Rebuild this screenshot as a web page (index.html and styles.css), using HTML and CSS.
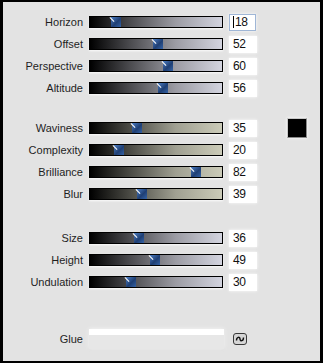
FILE: index.html
```html
<!DOCTYPE html>
<html lang="en">
<head>
    <meta charset="UTF-8">
    <meta name="viewport" content="width=device-width, initial-scale=1.0">
    <title>Waves</title>
    <link rel="stylesheet" href="styles.css">
</head>
<body>
    <div class="panel">
        <div class="group">
            <div class="row">
                <span class="lbl">Horizon</span>
                <div class="track cool"><span class="thumb" style="left:21px"></span></div>
                <div class="num focus"><span class="caret"></span>18</div>
            </div>
            <div class="row">
                <span class="lbl">Offset</span>
                <div class="track cool"><span class="thumb" style="left:63px"></span></div>
                <div class="num">52</div>
            </div>
            <div class="row">
                <span class="lbl">Perspective</span>
                <div class="track cool"><span class="thumb" style="left:73px"></span></div>
                <div class="num">60</div>
            </div>
            <div class="row">
                <span class="lbl">Altitude</span>
                <div class="track cool"><span class="thumb" style="left:68px"></span></div>
                <div class="num">56</div>
            </div>
        </div>

        <div class="group second">
            <div class="row">
                <span class="lbl">Waviness</span>
                <div class="track warm"><span class="thumb" style="left:42px"></span></div>
                <div class="num">35</div>
                <div class="swatch"></div>
            </div>
            <div class="row">
                <span class="lbl">Complexity</span>
                <div class="track warm"><span class="thumb" style="left:24px"></span></div>
                <div class="num">20</div>
            </div>
            <div class="row">
                <span class="lbl">Brilliance</span>
                <div class="track warm"><span class="thumb" style="left:101px"></span></div>
                <div class="num">82</div>
            </div>
            <div class="row">
                <span class="lbl">Blur</span>
                <div class="track warm"><span class="thumb" style="left:47px"></span></div>
                <div class="num">39</div>
            </div>
        </div>

        <div class="group third">
            <div class="row">
                <span class="lbl">Size</span>
                <div class="track cool"><span class="thumb" style="left:44px"></span></div>
                <div class="num">36</div>
            </div>
            <div class="row">
                <span class="lbl">Height</span>
                <div class="track cool"><span class="thumb" style="left:60px"></span></div>
                <div class="num">49</div>
            </div>
            <div class="row">
                <span class="lbl">Undulation</span>
                <div class="track cool"><span class="thumb" style="left:36px"></span></div>
                <div class="num">30</div>
            </div>
        </div>

        <div class="group glue">
            <div class="row">
                <span class="lbl">Glue</span>
                <div class="field"></div>
                <button class="link" type="button">
                    <svg width="14" height="12" viewBox="0 0 14 12">
                        <rect x="0.5" y="0.5" width="13" height="11" rx="2.5" fill="#d6d6d6" stroke="#3a3a3a"/>
                        <path d="M3.5 7.5 C3.5 3.5, 7 3.5, 7 6 S10.5 8.5, 10.5 4.5" fill="none" stroke="#111" stroke-width="1.4"/>
                    </svg>
                </button>
            </div>
        </div>
    </div>
</body>
</html>
```

FILE: styles.css
```css
body, html {
    margin: 0;
    height: 100%;
    background: #000;
    overflow: hidden;
}

.panel {
    width: 317px;
    height: 359px;
    border-style: solid;
    border-color: #000;
    border-width: 2px 3px 2px 3px;
    background: #e3e3e3;
    padding-top: 9px;
    box-sizing: content-box;
    font-family: "Liberation Sans", Arial, sans-serif;
    font-size: 11px;
    color: #1e1e1e;
}

.panel {
    height: 350px;
}

.group.second {
    margin-top: 18px;
}

.group.third {
    margin-top: 22px;
}

.group.glue {
    margin-top: 35px;
}

.row {
    display: flex;
    align-items: center;
    height: 22px;
}

.lbl {
    width: 80px;
    margin-right: 6px;
    text-align: right;
}

.track {
    position: relative;
    width: 132px;
    height: 10px;
    border: 1px solid #000;
    box-shadow: 0 1px 2px rgba(255,255,255,0.9);
}

.track.cool {
    background: linear-gradient(to right, #000 0%, #4a4a4e 30%, #9c9ca4 65%, #d3d4df 100%);
}

.track.warm {
    background: linear-gradient(to right, #000 0%, #4a4a44 30%, #a0a092 65%, #cbcbb8 100%);
}

/* slider knob sits over the track */
.thumb {
    position: absolute;
    top: 0;
    width: 10px;
    height: 10px;
    background: linear-gradient(135deg, #4c7dc2 0%, #1f3f74 55%, #3563a6 100%);
}

.thumb::before {
    content: "";
    position: absolute;
    left: -2px;
    top: 2px;
    width: 6px;
    height: 1px;
    background: #fff;
    transform: rotate(45deg);
}

.num {
    display: flex;
    align-items: center;
    width: 24px;
    height: 17px;
    margin-left: 6px;
    padding-left: 4px;
    background: #fff;
    font-size: 12px;
    letter-spacing: -0.5px;
    color: #111;
    box-shadow: 0 0 3px rgba(255,255,255,0.9);
}

.num.focus {
    width: 22px;
    height: 15px;
    padding-left: 3px;
    border: 1px solid #9fb6d6;
}

.caret {
    width: 1px;
    height: 12px;
    background: #000;
    margin-right: 1px;
}

.swatch {
    width: 18px;
    height: 18px;
    margin-left: 30px;
    background: #000;
    border: 1px solid #c8c8c8;
    border-right-color: #8a8a8a;
    border-bottom-color: #8a8a8a;
    box-shadow: 0 0 3px #fff;
}

.field {
    width: 135px;
    height: 20px;
    background: linear-gradient(#fff 0, #fff 6px, #e7e7e7 6px);
    box-shadow: 0 0 4px rgba(255,255,255,0.9), 0 1px 3px rgba(0,0,0,0.08);
}

.link {
    width: 14px;
    height: 12px;
    margin-left: 9px;
    padding: 0;
    border: 0;
    background: none;
    display: flex;
}
```
